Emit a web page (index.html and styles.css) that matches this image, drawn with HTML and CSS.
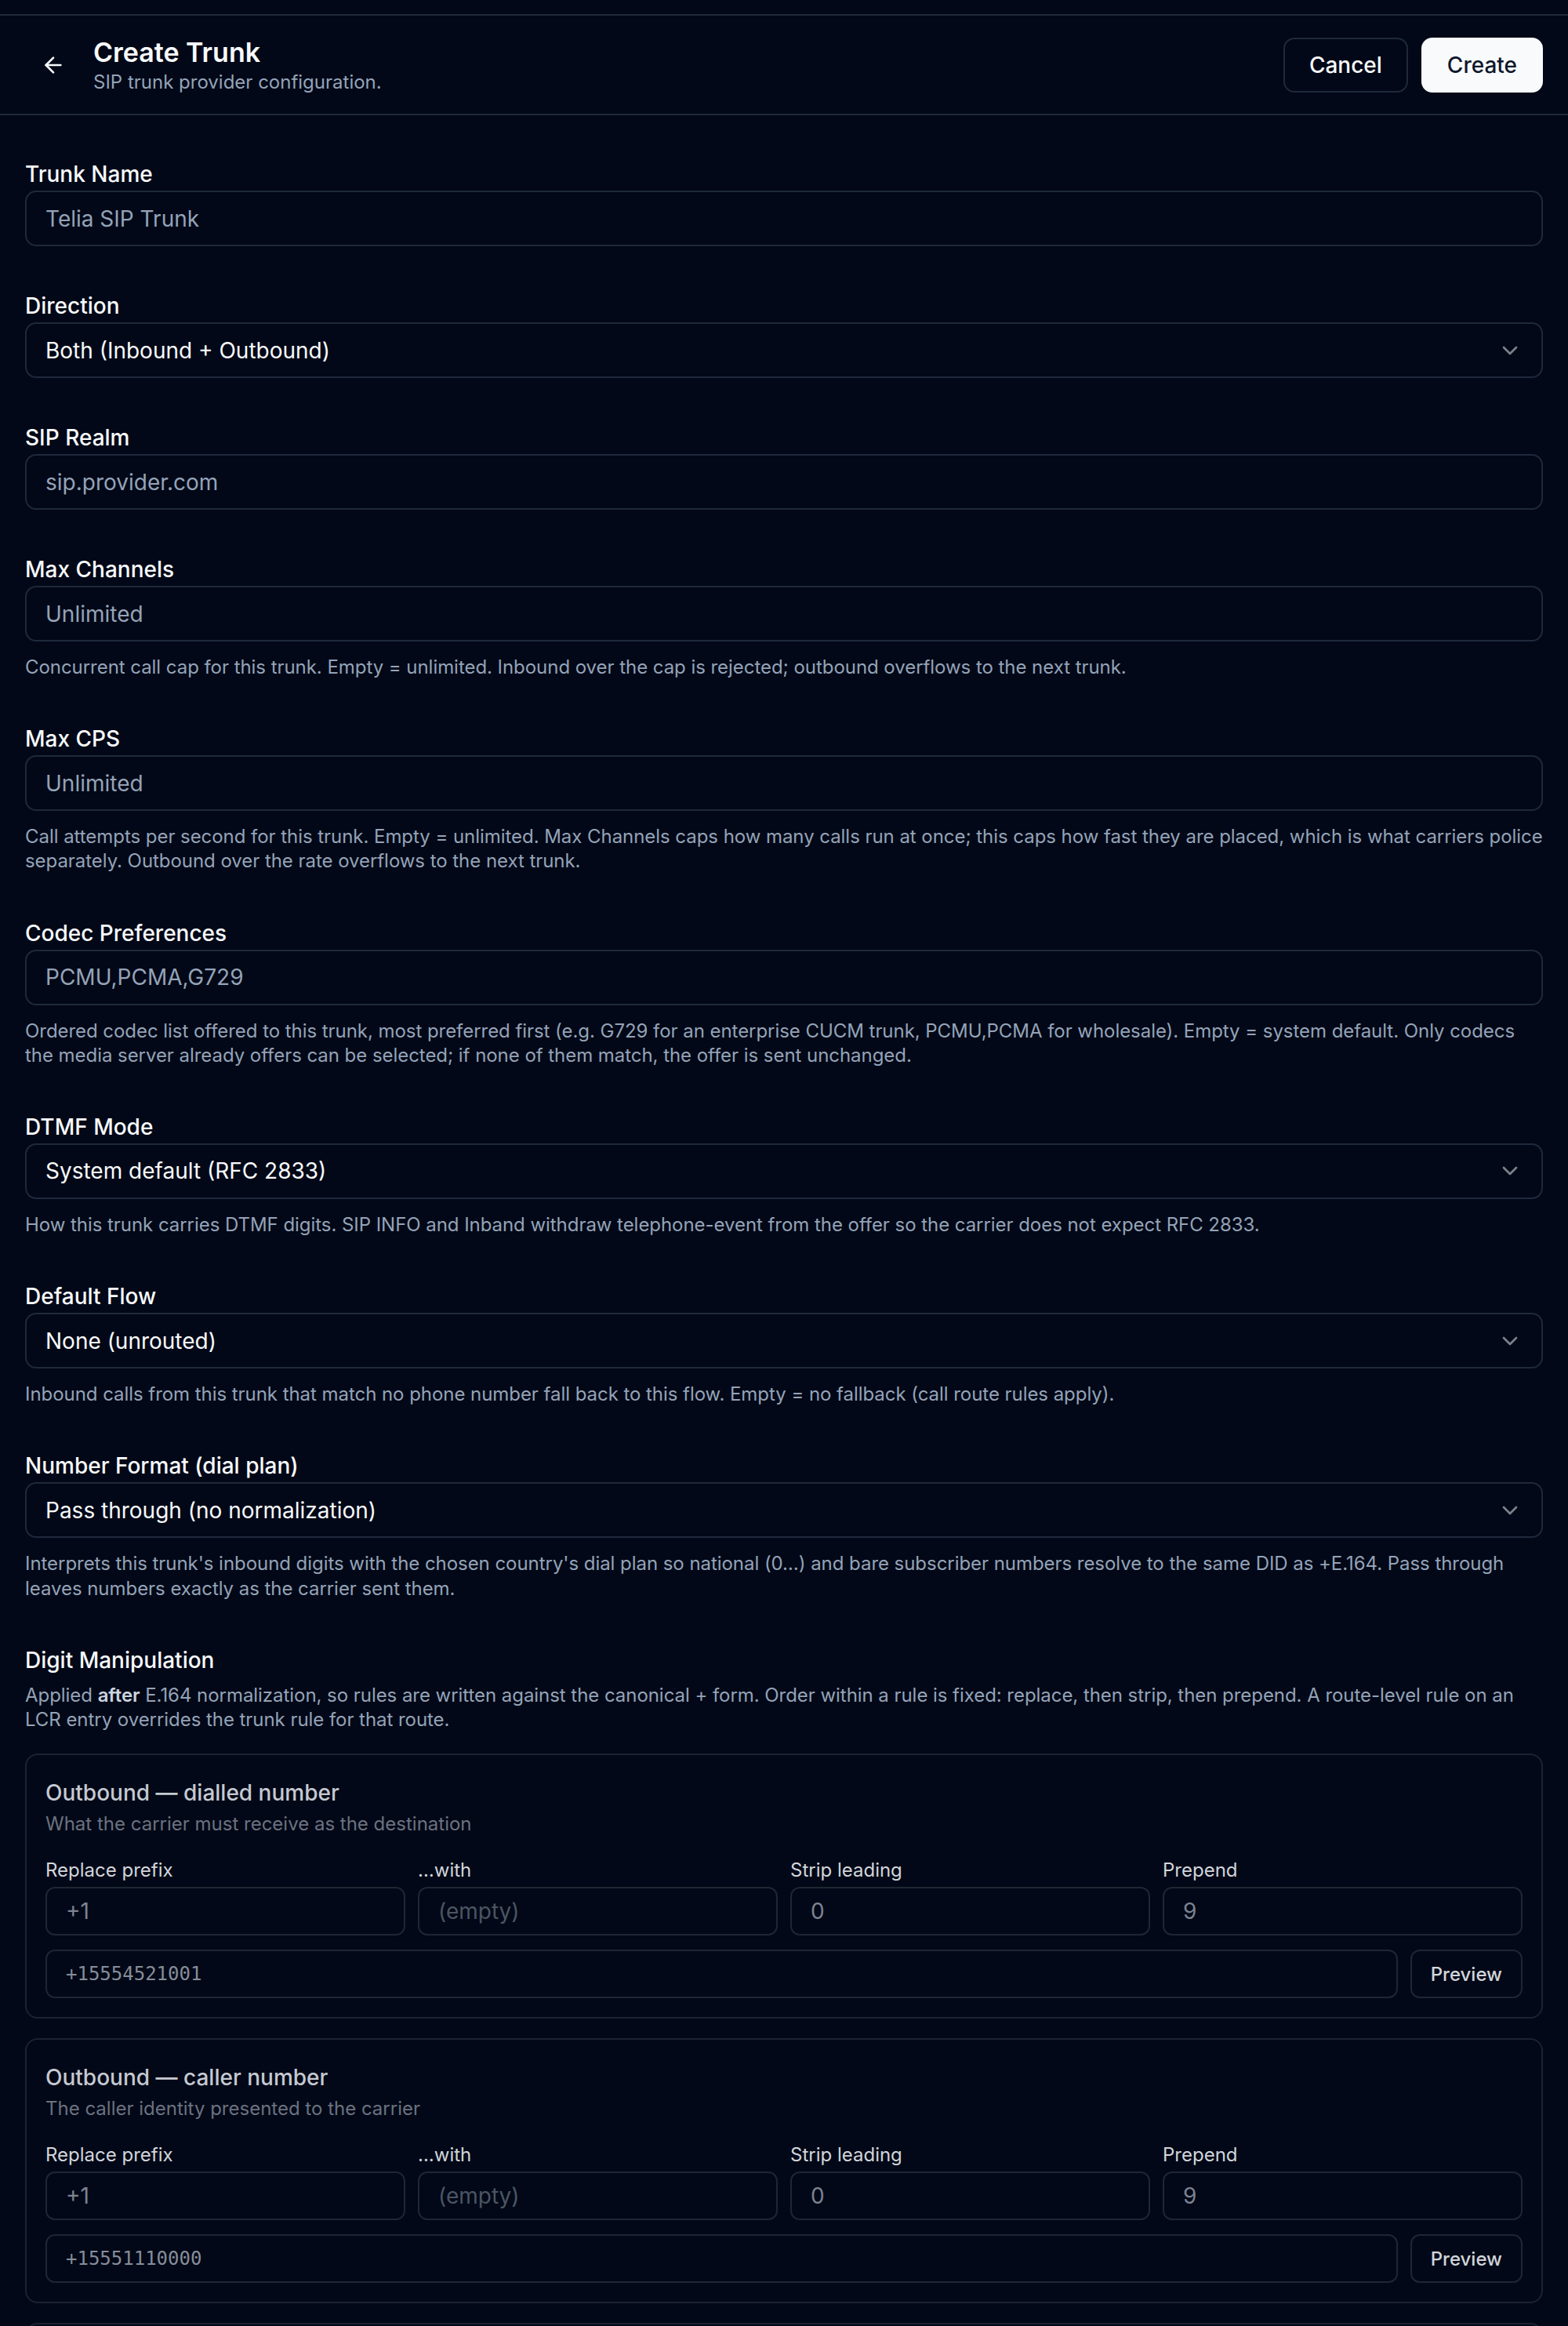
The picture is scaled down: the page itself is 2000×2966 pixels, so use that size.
FILE: index.html
```html
<!DOCTYPE html>
<html lang="en">
<head>
    <meta charset="UTF-8">
    <meta name="viewport" content="width=device-width, initial-scale=1.0">
    <title>Create Trunk</title>
    <link rel="stylesheet" href="styles.css">
</head>
<body>
    <div class="page">
        <!-- Page header -->
        <header class="header">
            <div class="header-left">
                <button class="back-btn" type="button" aria-label="Back">
                    <svg width="32" height="32" viewBox="0 0 24 24" fill="none" stroke="currentColor" stroke-width="2" stroke-linecap="round" stroke-linejoin="round">
                        <path d="m12 19-7-7 7-7"/>
                        <path d="M19 12H5"/>
                    </svg>
                </button>
                <div>
                    <h1 class="title">Create Trunk</h1>
                    <p class="subtitle">SIP trunk provider configuration.</p>
                </div>
            </div>
            <div class="actions">
                <button class="btn btn-outline" type="button">Cancel</button>
                <button class="btn btn-primary" type="submit">Create</button>
            </div>
        </header>

        <form class="form">
            <div class="field">
                <label class="label" for="name">Trunk Name</label>
                <input class="input" id="name" type="text" placeholder="Telia SIP Trunk">
            </div>

            <div class="field">
                <label class="label">Direction</label>
                <button class="select" type="button">
                    <span>Both (Inbound + Outbound)</span>
                    <svg class="chevron" width="32" height="32" viewBox="0 0 24 24" fill="none" stroke="currentColor" stroke-width="2" stroke-linecap="round" stroke-linejoin="round"><path d="m6 9 6 6 6-6"/></svg>
                </button>
            </div>

            <div class="field">
                <label class="label" for="realm">SIP Realm</label>
                <input class="input" id="realm" type="text" placeholder="sip.provider.com">
            </div>

            <div class="field">
                <label class="label" for="channels">Max Channels</label>
                <input class="input" id="channels" type="text" placeholder="Unlimited">
                <p class="help">Concurrent call cap for this trunk. Empty = unlimited. Inbound over the cap is rejected; outbound overflows to the next trunk.</p>
            </div>

            <div class="field">
                <label class="label" for="cps">Max CPS</label>
                <input class="input" id="cps" type="text" placeholder="Unlimited">
                <p class="help">Call attempts per second for this trunk. Empty = unlimited. Max Channels caps how many calls run at once; this caps how fast they are placed, which is what carriers police separately. Outbound over the rate overflows to the next trunk.</p>
            </div>

            <div class="field">
                <label class="label" for="codecs">Codec Preferences</label>
                <input class="input" id="codecs" type="text" placeholder="PCMU,PCMA,G729">
                <p class="help">Ordered codec list offered to this trunk, most preferred first (e.g. G729 for an enterprise CUCM trunk, PCMU,PCMA for wholesale). Empty = system default. Only codecs the media server already offers can be selected; if none of them match, the offer is sent unchanged.</p>
            </div>

            <div class="field">
                <label class="label">DTMF Mode</label>
                <button class="select" type="button">
                    <span>System default (RFC 2833)</span>
                    <svg class="chevron" width="32" height="32" viewBox="0 0 24 24" fill="none" stroke="currentColor" stroke-width="2" stroke-linecap="round" stroke-linejoin="round"><path d="m6 9 6 6 6-6"/></svg>
                </button>
                <p class="help">How this trunk carries DTMF digits. SIP INFO and Inband withdraw telephone-event from the offer so the carrier does not expect RFC 2833.</p>
            </div>

            <div class="field">
                <label class="label">Default Flow</label>
                <button class="select" type="button">
                    <span>None (unrouted)</span>
                    <svg class="chevron" width="32" height="32" viewBox="0 0 24 24" fill="none" stroke="currentColor" stroke-width="2" stroke-linecap="round" stroke-linejoin="round"><path d="m6 9 6 6 6-6"/></svg>
                </button>
                <p class="help">Inbound calls from this trunk that match no phone number fall back to this flow. Empty = no fallback (call route rules apply).</p>
            </div>

            <div class="field">
                <label class="label">Number Format (dial plan)</label>
                <button class="select" type="button">
                    <span>Pass through (no normalization)</span>
                    <svg class="chevron" width="32" height="32" viewBox="0 0 24 24" fill="none" stroke="currentColor" stroke-width="2" stroke-linecap="round" stroke-linejoin="round"><path d="m6 9 6 6 6-6"/></svg>
                </button>
                <p class="help">Interprets this trunk's inbound digits with the chosen country's dial plan so national (0…) and bare subscriber numbers resolve to the same DID as +E.164. Pass through leaves numbers exactly as the carrier sent them.</p>
            </div>

            <!-- Digit manipulation rules -->
            <section class="section">
                <h2 class="section-title">Digit Manipulation</h2>
                <p class="help section-help">Applied <strong>after</strong> E.164 normalization, so rules are written against the canonical + form. Order within a rule is fixed: replace, then strip, then prepend. A route-level rule on an LCR entry overrides the trunk rule for that route.</p>

                <div class="rule-card">
                    <h3 class="rule-title">Outbound — dialled number</h3>
                    <p class="rule-sub">What the carrier must receive as the destination</p>
                    <div class="rule-grid">
                        <div>
                            <label class="rule-label">Replace prefix</label>
                            <input class="rule-input" type="text" placeholder="+1">
                        </div>
                        <div>
                            <label class="rule-label">…with</label>
                            <input class="rule-input dim" type="text" placeholder="(empty)">
                        </div>
                        <div>
                            <label class="rule-label">Strip leading</label>
                            <input class="rule-input" type="text" placeholder="0">
                        </div>
                        <div>
                            <label class="rule-label">Prepend</label>
                            <input class="rule-input" type="text" placeholder="9">
                        </div>
                    </div>
                    <div class="preview-row">
                        <input class="mono-input" type="text" placeholder="+15554521001">
                        <button class="preview-btn" type="button">Preview</button>
                    </div>
                </div>

                <div class="rule-card">
                    <h3 class="rule-title">Outbound — caller number</h3>
                    <p class="rule-sub">The caller identity presented to the carrier</p>
                    <div class="rule-grid">
                        <div>
                            <label class="rule-label">Replace prefix</label>
                            <input class="rule-input" type="text" placeholder="+1">
                        </div>
                        <div>
                            <label class="rule-label">…with</label>
                            <input class="rule-input dim" type="text" placeholder="(empty)">
                        </div>
                        <div>
                            <label class="rule-label">Strip leading</label>
                            <input class="rule-input" type="text" placeholder="0">
                        </div>
                        <div>
                            <label class="rule-label">Prepend</label>
                            <input class="rule-input" type="text" placeholder="9">
                        </div>
                    </div>
                    <div class="preview-row">
                        <input class="mono-input" type="text" placeholder="+15551110000">
                        <button class="preview-btn" type="button">Preview</button>
                    </div>
                </div>

                <div class="rule-card">
                    <h3 class="rule-title">Inbound — called number</h3>
                    <p class="rule-sub">The number the carrier delivers to this trunk</p>
                    <div class="rule-grid">
                        <div>
                            <label class="rule-label">Replace prefix</label>
                            <input class="rule-input" type="text" placeholder="+1">
                        </div>
                        <div>
                            <label class="rule-label">…with</label>
                            <input class="rule-input dim" type="text" placeholder="(empty)">
                        </div>
                        <div>
                            <label class="rule-label">Strip leading</label>
                            <input class="rule-input" type="text" placeholder="0">
                        </div>
                        <div>
                            <label class="rule-label">Prepend</label>
                            <input class="rule-input" type="text" placeholder="9">
                        </div>
                    </div>
                    <div class="preview-row">
                        <input class="mono-input" type="text" placeholder="+15554521001">
                        <button class="preview-btn" type="button">Preview</button>
                    </div>
                </div>
            </section>
        </form>
    </div>
</body>
</html>
```

FILE: styles.css
```css
* {
    box-sizing: border-box;
}

body {
    margin: 0;
    background-color: #020817;
    color: #f8fafc;
    font-family: Inter, "Noto Sans", sans-serif;
}

.page {
    padding-top: 18px;
}

/* Header */

.header {
    display: flex;
    align-items: center;
    justify-content: space-between;
    height: 129px;
    padding: 0 32px;
    border-top: 2px solid #1e293b;
    border-bottom: 2px solid #1e293b;
}

.header-left {
    display: flex;
    align-items: center;
    gap: 15px;
}

.back-btn {
    display: flex;
    align-items: center;
    justify-content: center;
    width: 72px;
    height: 72px;
    padding: 0;
    background: none;
    border: none;
    border-radius: 14px;
    color: #f8fafc;
    cursor: pointer;
}

.title {
    margin: 0;
    font-size: 34px;
    line-height: 44px;
    font-weight: 600;
}

.subtitle {
    margin: 0;
    font-size: 24px;
    line-height: 32px;
    color: #94a3b8;
}

.actions {
    display: flex;
    gap: 17px;
}

.btn {
    height: 70px;
    padding: 0 31px;
    font-family: inherit;
    font-size: 28px;
    font-weight: 500;
    border-radius: 14px;
    border: 2px solid;
    cursor: pointer;
}

.btn-outline {
    background: transparent;
    border-color: #1e293b;
    color: #f8fafc;
}

.btn-primary {
    background-color: #f8fafc;
    border-color: #f8fafc;
    color: #0f172a;
}

/* Form */

.form {
    padding: 61px 32px 0;
}

.field {
    margin-bottom: 62px;
}

.label,
.section-title {
    display: block;
    margin: 0 0 7px;
    font-size: 28px;
    line-height: 28px;
    font-weight: 500;
    color: #f8fafc;
}

.input,
.select {
    display: flex;
    align-items: center;
    width: 100%;
    height: 71px;
    padding: 0 24px;
    background: transparent;
    border: 2px solid #1e293b;
    border-radius: 14px;
    font-family: inherit;
    font-size: 28px;
    color: #f8fafc;
    outline: none;
}

.input::placeholder {
    color: #94a3b8;
}

.select {
    justify-content: space-between;
    text-align: left;
    cursor: pointer;
}

.chevron {
    opacity: 0.5;
    flex-shrink: 0;
}

.help {
    margin: 17px 0 0;
    font-size: 24px;
    line-height: 1.3;
    letter-spacing: -0.05px;
    color: #94a3b8;
}

.help strong {
    font-weight: 600;
    color: #cbd5e1;
}

/* Digit manipulation */

.section-title {
    margin-bottom: 15px;
}

.section-help {
    margin: 0 0 28px;
}

.rule-card {
    margin-bottom: 25px;
    padding: 34px 24px 24px;
    border: 2px solid #1c2230;
    border-radius: 16px;
}

.rule-title {
    margin: 0;
    font-size: 28px;
    line-height: 28px;
    font-weight: 500;
    color: #c5c9d1;
}

.rule-sub {
    margin: 10px 0 0;
    font-size: 24px;
    line-height: 31px;
    color: #6b7280;
}

.rule-grid {
    display: grid;
    grid-template-columns: repeat(4, 1fr);
    gap: 16px;
    margin-top: 28px;
}

.rule-label {
    display: block;
    margin-bottom: 6px;
    font-size: 24px;
    line-height: 31px;
    color: #d1d5db;
}

.rule-input,
.mono-input {
    display: block;
    width: 100%;
    height: 62px;
    padding: 0 24px;
    background: transparent;
    border: 2px solid #1f2633;
    border-radius: 12px;
    font-family: inherit;
    font-size: 28px;
    color: #d1d5db;
    outline: none;
}

.rule-input::placeholder {
    color: #7c8391;
}

.rule-input.dim::placeholder {
    color: #4b5563;
}

.preview-row {
    display: flex;
    gap: 16px;
    margin-top: 18px;
}

.mono-input {
    flex: 1;
    font-family: "DejaVu Sans Mono", "Liberation Mono", monospace;
    font-size: 24px;
}

.mono-input::placeholder {
    color: #868d99;
}

.preview-btn {
    height: 62px;
    padding: 0 24px;
    background: transparent;
    border: 2px solid #1f2633;
    border-radius: 12px;
    font-family: inherit;
    font-size: 24px;
    font-weight: 500;
    color: #d1d5db;
    cursor: pointer;
}
```
